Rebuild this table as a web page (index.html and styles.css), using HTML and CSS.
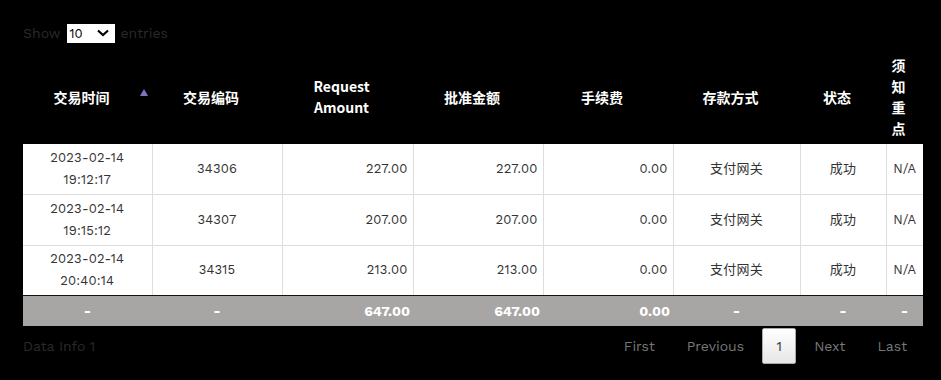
FILE: index.html
```html
<!DOCTYPE html>
<html lang="zh">
<head>
<meta charset="utf-8">
<title>Deposit Records</title>
<link rel="stylesheet" href="styles.css">
</head>
<body>
<div class="wrap">
  <div class="length">
    <span>Show</span>
    <span class="select">10
      <svg width="14" height="10" viewBox="0 0 14 10"><path d="M2 2.5 L7 7 L12 2.5" fill="none" stroke="#000" stroke-width="2.2"/></svg>
    </span>
    <span>entries</span>
  </div>
  <table class="grid">
    <colgroup>
      <col class="c1"><col class="c2"><col class="c3"><col class="c4"><col class="c5"><col class="c6"><col class="c7"><col class="c8">
    </colgroup>
    <thead>
      <tr>
        <th class="sorted">交易时间<span class="arrow"></span></th>
        <th>交易编码</th>
        <th>Request<br>Amount</th>
        <th>批准金额</th>
        <th>手续费</th>
        <th>存款方式</th>
        <th>状态</th>
        <th class="narrow">须知重点</th>
      </tr>
    </thead>
    <tbody>
      <tr>
        <td>2023-02-14<br>19:12:17</td><td>34306</td><td class="num">227.00</td><td class="num">227.00</td><td class="num">0.00</td><td>支付网关</td><td>成功</td><td>N/A</td>
      </tr>
      <tr>
        <td>2023-02-14<br>19:15:12</td><td>34307</td><td class="num">207.00</td><td class="num">207.00</td><td class="num">0.00</td><td>支付网关</td><td>成功</td><td>N/A</td>
      </tr>
      <tr>
        <td>2023-02-14<br>20:40:14</td><td>34315</td><td class="num">213.00</td><td class="num">213.00</td><td class="num">0.00</td><td>支付网关</td><td>成功</td><td>N/A</td>
      </tr>
    </tbody>
    <tfoot>
      <tr>
        <td>-</td><td>-</td><td class="num">647.00</td><td class="num">647.00</td><td class="num">0.00</td><td>-</td><td>-</td><td>-</td>
      </tr>
    </tfoot>
  </table>
  <div class="bottom">
    <div class="info">Data Info 1</div>
    <div class="pager">
      <span class="pg">First</span>
      <span class="pg">Previous</span>
      <span class="pg current">1</span>
      <span class="pg">Next</span>
      <span class="pg">Last</span>
    </div>
  </div>
</div>
</body>
</html>
```
FILE: styles.css
```css
html, body {
  margin: 0;
  background: #000;
}
body {
  font-family: "Work Sans", Inter, "Noto Sans CJK SC", sans-serif;
  font-size: 13px;
  color: #333;
}
.wrap {
  padding: 23px 18px 0 23px;
}
.length {
  display: flex;
  align-items: center;
  gap: 6px;
  height: 20px;
  color: #2a2a2a;
  font-size: 14px;
}
.select {
  display: inline-flex;
  align-items: center;
  justify-content: space-between;
  box-sizing: border-box;
  width: 48px;
  height: 19px;
  padding: 0 5px 0 3px;
  background: #fff;
  color: #000;
  font-size: 13px;
}
.grid {
  margin-top: 12px;
  width: 900px;
  table-layout: fixed;
  border-collapse: collapse;
}
.c1 { width: 129px; }
.c2 { width: 130px; }
.c3 { width: 131px; }
.c4 { width: 130px; }
.c5 { width: 130px; }
.c6 { width: 127px; }
.c7 { width: 86px; }
.c8 { width: 37px; }
.grid th {
  background: #000;
  color: #fff;
  font-family: "Noto Sans CJK SC", sans-serif;
  font-weight: 700;
  font-size: 14px;
  line-height: 21px;
  height: 89px;
  padding: 0 16px 5px 4px;
  box-sizing: border-box;
  text-align: center;
  vertical-align: middle;
}
.grid th.sorted {
  position: relative;
}
.arrow {
  position: absolute;
  right: 4px;
  top: 34px;
  width: 0;
  height: 0;
  border-left: 4px solid transparent;
  border-right: 4px solid transparent;
  border-bottom: 7px solid #7a78c4;
}
.grid th.narrow {
  padding: 0 14px 5px 2px;
  word-break: break-all;
}
.grid tbody td {
  background: #fff;
  color: #333;
  border: 1px solid #ddd;
  height: 50.5px;
  padding: 0 5px;
  box-sizing: border-box;
  line-height: 22px;
  text-align: center;
  vertical-align: middle;
  letter-spacing: 0.2px;
}
.grid tbody tr:first-child td { border-top: none; }
.grid tbody td:first-child { border-left: none; }
.grid tbody td:last-child { border-right: none; }
.grid tbody tr:last-child td { border-bottom: 1px solid #111; }
.grid td.num { text-align: right; }
.grid tfoot td {
  background: #a8a5a5;
  color: #fff;
  font-weight: 700;
  font-size: 14px;
  height: 30px;
  padding: 0 3px;
  text-align: center;
  vertical-align: middle;
}
.grid tfoot td.num { text-align: right; }
.bottom {
  display: flex;
  justify-content: space-between;
  align-items: flex-start;
  width: 900px;
}
.info {
  padding-top: 12px;
  color: #2a2a2a;
  font-size: 14px;
}
.pager {
  display: flex;
  align-items: center;
  padding-top: 2px;
  padding-right: 0;
}
.pg {
  display: inline-flex;
  align-items: center;
  justify-content: center;
  box-sizing: border-box;
  height: 36px;
  padding: 0 15px;
  color: #777;
  font-size: 14px;
  border: 1px solid transparent;
  border-radius: 2px;
}
.pg.current {
  width: 34px;
  padding: 0;
  margin: 0 2px;
  background: linear-gradient(#fff, #e6e6e6);
  border-color: #aaa;
  color: #333;
}
```
